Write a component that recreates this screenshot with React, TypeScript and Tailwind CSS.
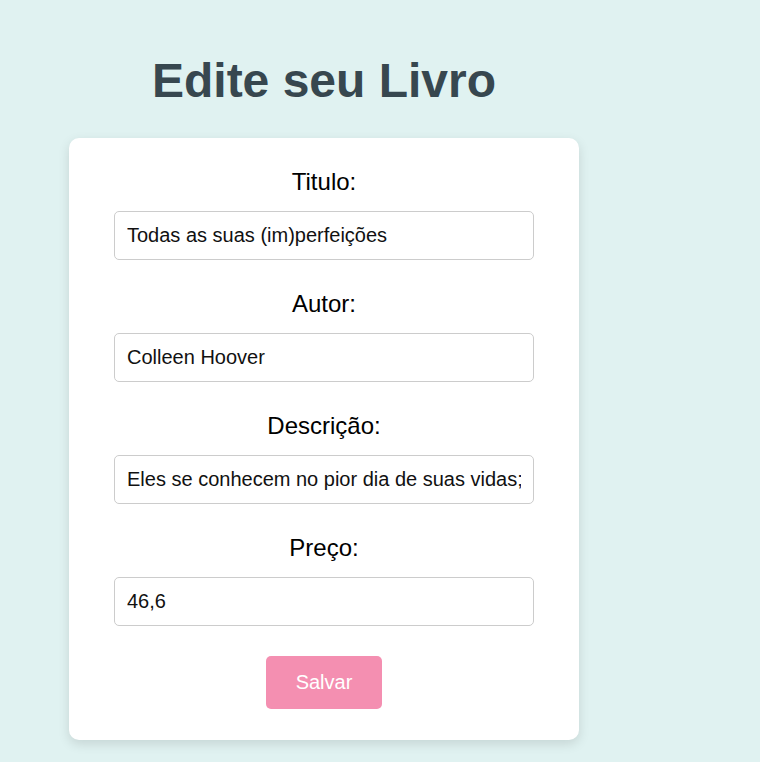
const fields = [
  { label: 'Titulo:', value: 'Todas as suas (im)perfeições' },
  { label: 'Autor:', value: 'Colleen Hoover' },
  {
    label: 'Descrição:',
    value:
      'Eles se conhecem no pior dia de suas vidas; ele está saindo de um término e ela acaba de descobrir uma traição.',
  },
  { label: 'Preço:', value: '46,6' },
];

export default function App() {
  return (
    <div
      className="min-h-screen bg-[#e0f2f1] pt-[53px]"
      style={{ fontFamily: '"Liberation Sans", Arial, sans-serif' }}
    >
      <div className="ml-[69px] w-[510px]">
        <h1 className="text-center text-[48px] font-bold leading-[55px] text-[#37474f]">
          Edite seu Livro
        </h1>

        <form
          className="mt-[30px] rounded-[10px] bg-white px-[45px] pt-[30px] pb-[31px] shadow-[0_4px_12px_rgba(0,0,0,0.12)]"
          onSubmit={(e) => e.preventDefault()}
        >
          {fields.map((f) => (
            <div key={f.label} className="mb-[30px] flex flex-col">
              <label className="mb-4 text-center text-[24px] leading-[27px] text-black">
                {f.label}
              </label>
              <input
                type="text"
                defaultValue={f.value}
                className="h-[49px] w-full rounded-[5px] border border-[#cccccc] px-3 text-[20px] text-[#111] outline-none"
              />
            </div>
          ))}

          <div className="flex justify-center">
            <button
              type="submit"
              className="rounded-[5px] bg-[#f48fb1] px-[30px] py-[15px] text-[20px] leading-[23px] text-white"
            >
              Salvar
            </button>
          </div>
        </form>
      </div>
    </div>
  );
}
